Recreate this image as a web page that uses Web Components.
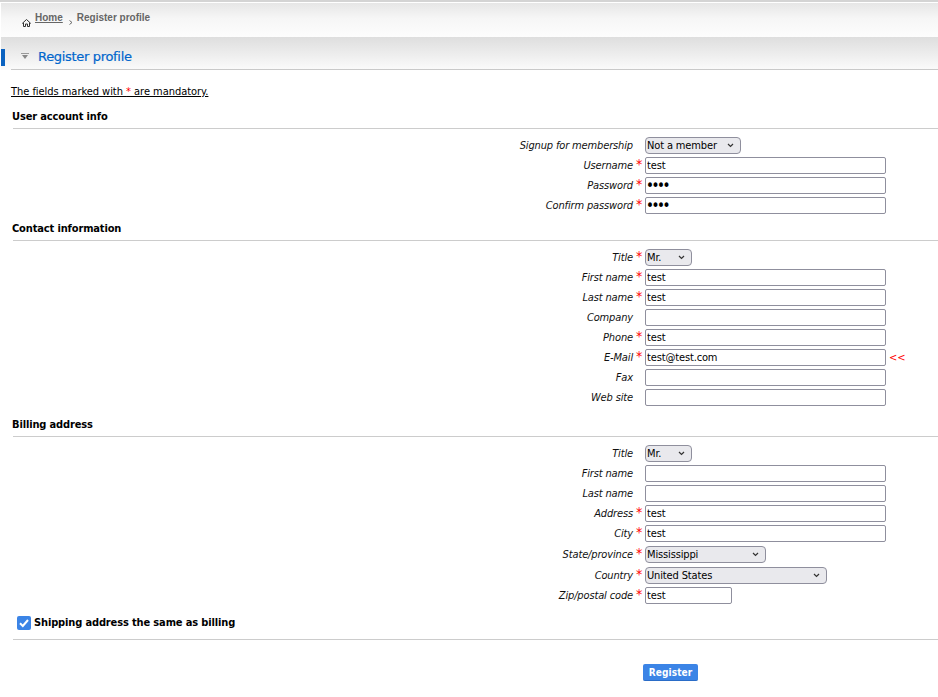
<!DOCTYPE html>
<html><head><meta charset="utf-8"><title>Register profile</title>
<style>
html,body{margin:0;padding:0;background:#fff}
body{font:11px "DejaVu Sans",sans-serif;font-stretch:condensed;color:#000;width:938px;height:697px;overflow:hidden}
</style></head><body>
<x-page>
<x-crumbs></x-crumbs>
<x-title>Register profile</x-title>
<x-note></x-note>
<x-section heading="User account info" gap="11">
  <x-row label="Signup for membership"><x-select width="96">Not a member</x-select></x-row>
  <x-row label="Username" req><x-input value="test"></x-input></x-row>
  <x-row label="Password" req><x-input value="test" type="password"></x-input></x-row>
  <x-row label="Confirm password" req><x-input value="test" type="password"></x-input></x-row>
</x-section>
<x-section heading="Contact information" gap="8">
  <x-row label="Title" req><x-select width="47">Mr.</x-select></x-row>
  <x-row label="First name" req><x-input value="test"></x-input></x-row>
  <x-row label="Last name" req><x-input value="test"></x-input></x-row>
  <x-row label="Company"><x-input></x-input></x-row>
  <x-row label="Phone" req><x-input value="test"></x-input></x-row>
  <x-row label="E-Mail" req flag><x-input value="test@test.com"></x-input></x-row>
  <x-row label="Fax"><x-input></x-input></x-row>
  <x-row label="Web site"><x-input></x-input></x-row>
</x-section>
<x-section heading="Billing address" gap="12">
  <x-row label="Title"><x-select width="47">Mr.</x-select></x-row>
  <x-row label="First name"><x-input></x-input></x-row>
  <x-row label="Last name"><x-input></x-input></x-row>
  <x-row label="Address" req><x-input value="test"></x-input></x-row>
  <x-row label="City" req><x-input value="test"></x-input></x-row>
  <x-row label="State/province" req tall><x-select width="121">Mississippi</x-select></x-row>
  <x-row label="Country" req tall><x-select width="182">United States</x-select></x-row>
  <x-row label="Zip/postal code" req><x-input value="test" width="87"></x-input></x-row>
</x-section>
<x-same>Shipping address the same as billing</x-same>
<x-submit>Register</x-submit>
</x-page>
<script>
function def(name, css, html){
  customElements.define(name, class extends HTMLElement{
    connectedCallback(){
      if(this.shadowRoot) return;
      const s=this.attachShadow({mode:'open'});
      s.innerHTML='<style>'+css+'</style>'+(typeof html==='function'?html(this):html);
    }
  });
}
const esc=s=>(s||'').replace(/&/g,'&amp;').replace(/"/g,'&quot;').replace(/</g,'&lt;');
const F='font-family:"DejaVu Sans",sans-serif;font-stretch:condensed;letter-spacing:-.14px;';
def('x-page',':host{display:block}','<slot></slot>');
def('x-crumbs',`
:host{display:flex;align-items:flex-start;box-sizing:border-box;height:34px;margin-top:3px;margin-left:1px;padding:9px 0 0 21px;
 background:linear-gradient(#e6e6e6,#f6f6f6 45%,#fdfdfd);font:bold 10px "Liberation Sans",sans-serif;color:#666;position:relative}
:host::before{content:"";position:absolute;left:-1px;right:0;top:-3px;height:2px;background:#d4d4d4}
svg{display:block;margin-top:7px;margin-right:4px}
a{color:#666;text-decoration:underline;line-height:12px}
.sep{margin:8px 4px 0 6px;display:block}
span{line-height:12px}
`,`<svg width="9" height="8" viewBox="0 0 9 8" fill="none" stroke="#333" stroke-width="1"><path d="M.2 4.500 4.500.500 8.800 4.500M1.500 3.800V7.500h2V5h2v2.500h2V3.800"/></svg><a>Home</a><svg class="sep" width="4" height="5" viewBox="0 0 4 5" fill="none" stroke="#666"><path d="M.5.500 3 2.500 .5 4.500"/></svg><span>Register profile</span>`);
def('x-title',`
:host{display:block;position:relative;height:33px;margin-left:1px;background:linear-gradient(#dedede,#fbfbfb);box-sizing:border-box}
.bar{position:absolute;left:0;top:12px;width:4px;height:17px;background:#0a62c0}
.in{position:absolute;left:10px;right:0;top:0;bottom:0;border-bottom:1px solid #c9c9c9;display:flex;align-items:center;padding:6px 0 0 10px;box-sizing:border-box}
svg{display:block;margin-right:9px}
h1{margin:0;font:normal 13px "DejaVu Sans",sans-serif;letter-spacing:-.32px;color:#0066cc;-webkit-text-stroke:.2px #0066cc}
`,`<div class="bar"></div><div class="in"><svg width="8" height="6" viewBox="0 0 8 6"><path d="M0 0h8v1H0z" fill="#999"/><path d="M1 2h6L4 6z" fill="#888"/></svg><h1><slot></slot></h1></div>`);
def('x-note',`
:host{display:block;margin:15px 0 0 11px;font-size:11px;line-height:14px;height:14px;${F}letter-spacing:-.04px}
span{text-decoration:underline}i{font-style:normal;color:#f00}
`,`<span>The fields marked with <i>*</i> are mandatory.</span>`);
def('x-section',`
:host{display:block}
h2{margin:0;font-weight:bold;font-size:11px;line-height:14px;${F}padding:5px 0 4px 12px}
.line{height:1px;background:#ccc;margin-left:13px}
.rows{padding:8px 0 0;display:flex;flex-direction:column;gap:3px}
`,h=>`<h2 style="padding-top:${h.getAttribute('gap')}px">${esc(h.getAttribute('heading'))}</h2><div class="line"></div><div class="rows"><slot></slot></div>`);
def('x-row',`
:host{display:grid;grid-template-columns:633px 12px auto 1fr;align-items:center;height:17px;font-style:italic;${F}}
:host([tall]){margin-top:1px}
.l{text-align:right;white-space:nowrap;color:#111}
.r{color:#f00;font-style:normal;font-size:14px;line-height:15px;padding-left:3px;box-sizing:border-box;height:17px}
.f{font-style:normal;display:flex}
.x{color:#f00;font-style:normal;padding-left:3px}
`,h=>`<div class="l">${esc(h.getAttribute('label'))}</div><div class="r">${h.hasAttribute('req')?'*':''}</div><div class="f"><slot></slot></div><div class="x">${h.hasAttribute('flag')?'&lt;&lt;':''}</div>`);
def('x-input',`
:host{display:block}
input{display:block;box-sizing:border-box;height:17px;margin:0;padding:0 1px;border:1px solid #8f8f9d;border-radius:2px;background:#fff;color:#000;font-size:11px;${F}outline:0}
input[type=password]{font-size:15px;letter-spacing:-2.500px;padding-left:0}
`,h=>`<input type="${h.getAttribute('type')||'text'}" style="width:${h.getAttribute('width')||241}px" value="${esc(h.getAttribute('value'))}">`);
def('x-select',`
:host{display:block;position:relative}
select{display:block;appearance:none;-webkit-appearance:none;box-sizing:border-box;height:17px;margin:0;padding:0 0 0 1px;border:1px solid #8f8f9d;border-radius:4px;background:#e9e9ed;color:#000;font-size:11px;${F}outline:0}
svg{position:absolute;right:7px;top:6px;pointer-events:none}
`,h=>`<select style="width:${h.getAttribute('width')}px"><option>${esc(h.textContent)}</option></select><svg width="7" height="5" viewBox="0 0 7 5" fill="none" stroke="#333" stroke-width="1.200"><path d="M1 1l2.500 2.500L6 1"/></svg>`);
def('x-same',`
:host{display:block;font-weight:bold;font-size:11px;line-height:14px;${F}}
.t{display:flex;align-items:center;margin:12px 0 0 17px;height:14px;gap:3px}
.b{width:14px;height:14px;border-radius:2px;background:#3b84e6;display:block}
.line{height:1px;background:#ccc;margin:9px 0 0 13px}
`,`<div class="t"><svg class="b" viewBox="0 0 14 14"><path d="M3 7.300 5.800 10 11 4" fill="none" stroke="#fff" stroke-width="2"/></svg><slot></slot></div><div class="line"></div>`);
def('x-submit',`
:host{display:block;padding:24px 0 0 643px}
button{display:block;box-sizing:border-box;width:55px;height:17px;margin:0;padding:0;border:0;border-bottom:1px solid #2a6cc7;border-radius:2px;background:#3b84e6;color:#fff;font-weight:bold;font-size:10px;${F}letter-spacing:.1px}
`,`<button><slot></slot></button>`);
</script>
</body></html>
